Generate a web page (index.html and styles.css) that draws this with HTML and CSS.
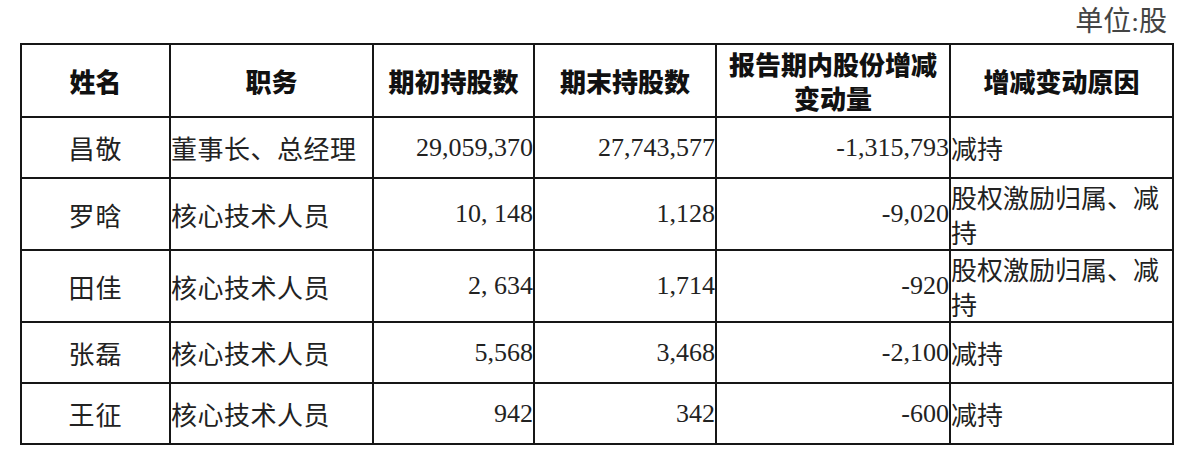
FILE: index.html
```html
<!DOCTYPE html>
<html lang="zh-CN">
<head>
<meta charset="utf-8">
<title>持股变动</title>
<link rel="stylesheet" href="styles.css">
</head>
<body>
<div class="page">
  <div class="unit">单位:股</div>
  <table class="holdings">
    <colgroup>
      <col class="c-name">
      <col class="c-role">
      <col class="c-start">
      <col class="c-end">
      <col class="c-change">
      <col class="c-reason">
    </colgroup>
    <thead>
      <tr class="head-row">
        <th>姓名</th>
        <th>职务</th>
        <th>期初持股数</th>
        <th>期末持股数</th>
        <th>报告期内股份增减<br>变动量</th>
        <th>增减变动原因</th>
      </tr>
    </thead>
    <tbody>
      <tr class="row-short">
        <td class="name">昌敬</td>
        <td class="role">董事长、总经理</td>
        <td class="num">29,059,370</td>
        <td class="num">27,743,577</td>
        <td class="num">-1,315,793</td>
        <td class="reason">减持</td>
      </tr>
      <tr class="row-tall">
        <td class="name">罗晗</td>
        <td class="role">核心技术人员</td>
        <td class="num">10, 148</td>
        <td class="num">1,128</td>
        <td class="num">-9,020</td>
        <td class="reason">股权激励归属、减持</td>
      </tr>
      <tr class="row-tall">
        <td class="name">田佳</td>
        <td class="role">核心技术人员</td>
        <td class="num">2, 634</td>
        <td class="num">1,714</td>
        <td class="num">-920</td>
        <td class="reason">股权激励归属、减持</td>
      </tr>
      <tr class="row-short">
        <td class="name">张磊</td>
        <td class="role">核心技术人员</td>
        <td class="num">5,568</td>
        <td class="num">3,468</td>
        <td class="num">-2,100</td>
        <td class="reason">减持</td>
      </tr>
      <tr class="row-short">
        <td class="name">王征</td>
        <td class="role">核心技术人员</td>
        <td class="num">942</td>
        <td class="num">342</td>
        <td class="num">-600</td>
        <td class="reason">减持</td>
      </tr>
    </tbody>
  </table>
</div>
</body>
</html>
```

FILE: styles.css
```css
html, body {
  margin: 0;
  padding: 0;
  background: #ffffff;
}

body {
  font-family: "Liberation Serif", "Noto Sans CJK SC", serif;
  color: #222222;
}

.page {
  width: 1200px;
  height: 464px;
  box-sizing: border-box;
  padding: 0 28px 0 20px;
}

.unit {
  height: 43px;
  line-height: 43px;
  text-align: right;
  font-size: 28px;
  padding-right: 5px;
  color: #444444;
}

.holdings {
  width: 1152px;
  table-layout: fixed;
  border-collapse: collapse;
  font-size: 26px;
}

.c-name { width: 149px; }
.c-role { width: 203px; }
.c-start { width: 161px; }
.c-end { width: 182px; }
.c-change { width: 234px; }
.c-reason { width: 223px; }

.holdings th,
.holdings td {
  border: 2px solid #161616;
  padding: 0;
  vertical-align: middle;
}

.holdings th {
  font-family: "Noto Sans CJK SC", sans-serif;
  font-weight: 900;
  font-size: 26px;
  line-height: 34px;
  text-align: center;
  color: #111;
}

.head-row { height: 73px; }
.row-short { height: 61px; }
.row-tall { height: 72px; }

.name {
  text-align: center;
  font-family: "Noto Sans CJK SC", sans-serif;
  font-weight: 400;
  letter-spacing: 1px;
}

.role {
  text-align: left;
  font-family: "Noto Sans CJK SC", sans-serif;
  letter-spacing: 0.5px;
}

.num {
  text-align: right;
  white-space: pre;
}

.reason {
  text-align: left;
  font-family: "Noto Sans CJK SC", sans-serif;
  line-height: 35px;
}
```
